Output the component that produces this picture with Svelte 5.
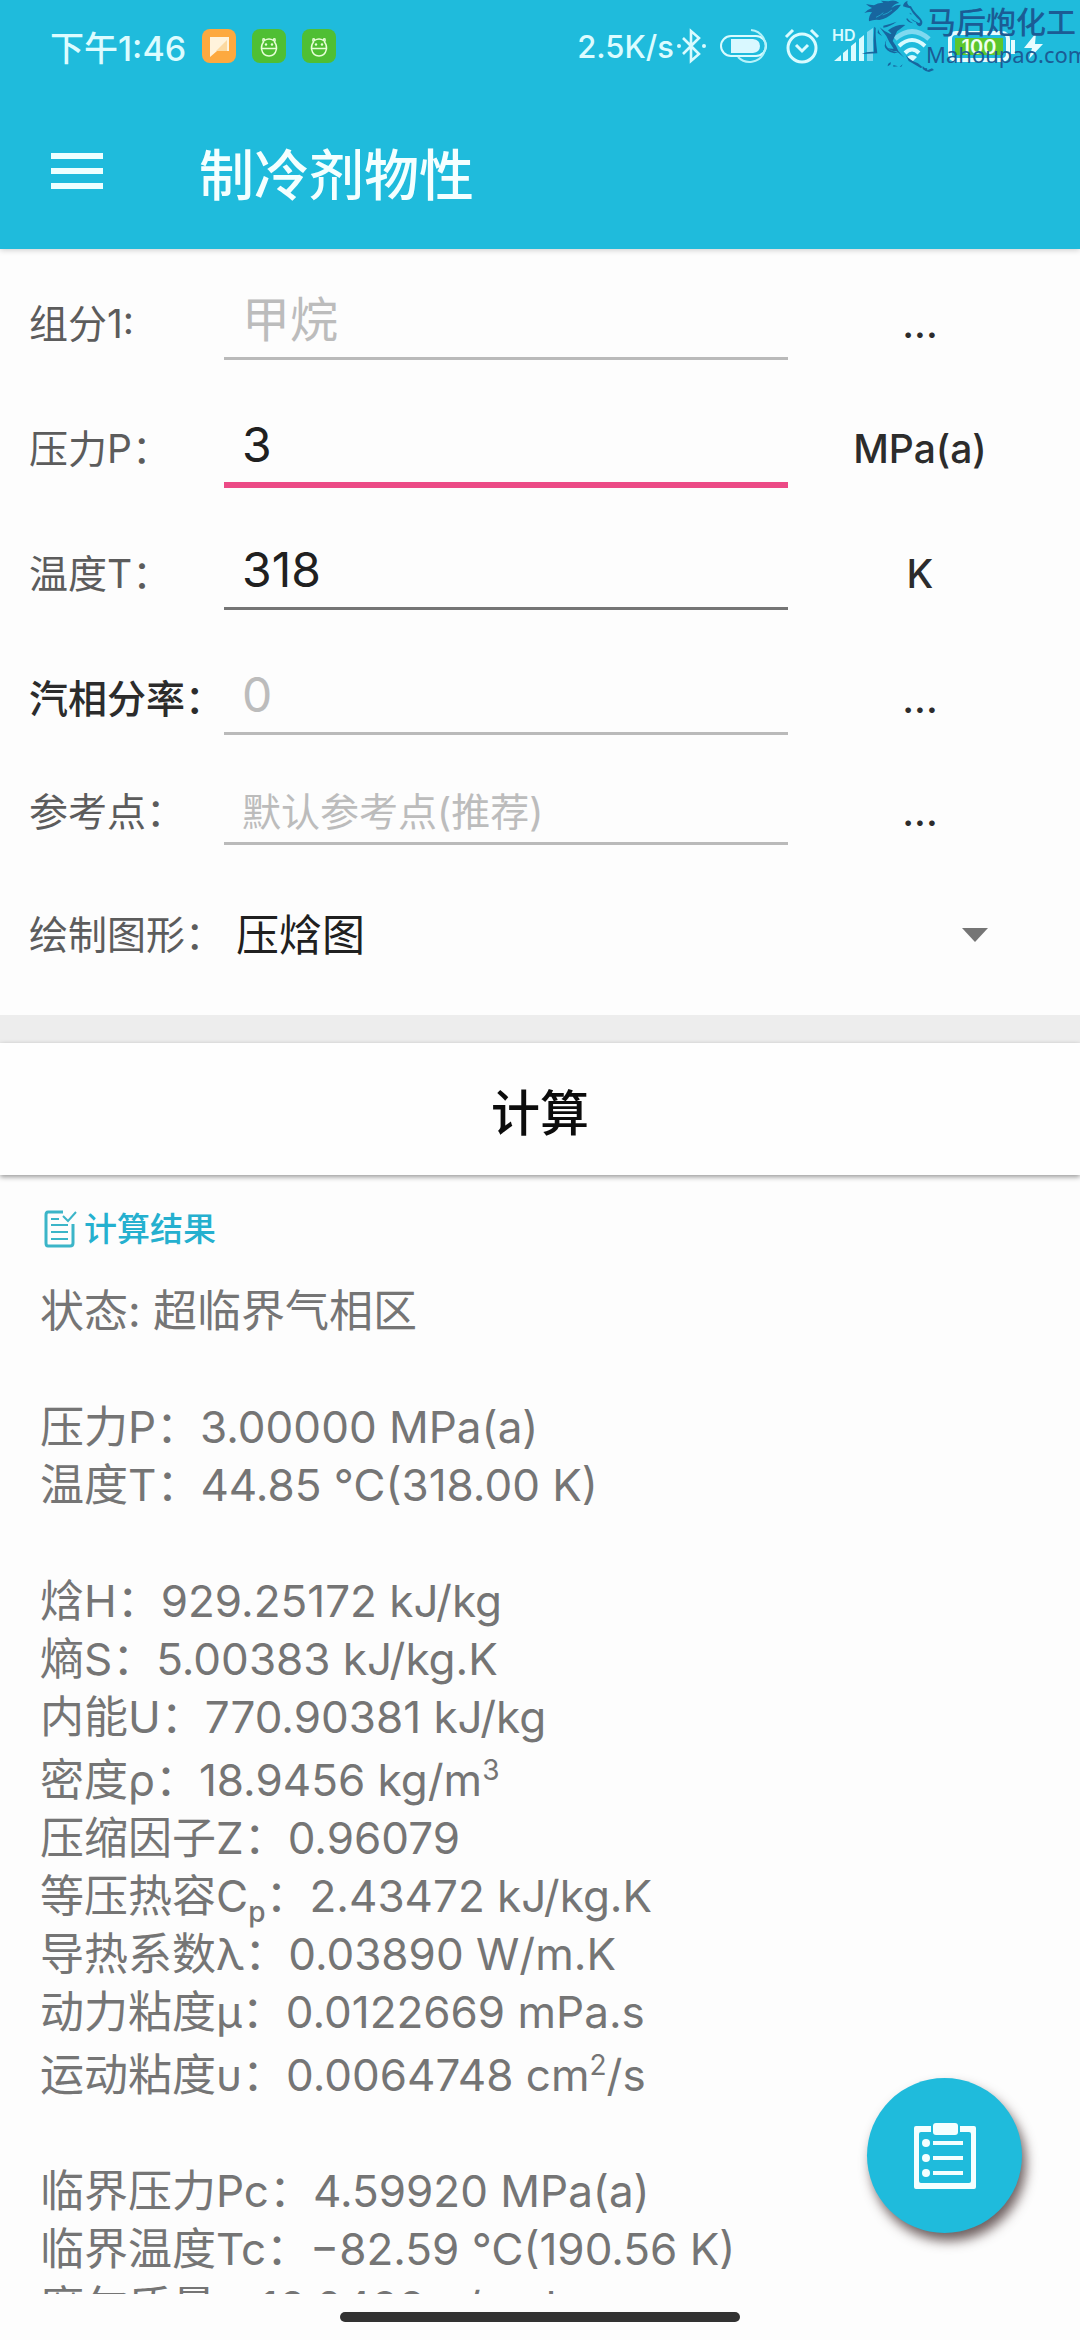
<script lang="ts">
  interface Field {
    id: string;
    label: string;
    value: string;
    placeholder: string;
    unit: string;
    strong?: boolean;
    compact?: boolean;
    active?: boolean;
  }

  interface Result {
    label: string;
    sub?: string;
    value: string;
    sup?: string;
    tail?: string;
  }

  let fields = $state<Field[]>([
    { id: "component", label: "组分1:", value: "", placeholder: "甲烷", unit: "..." },
    { id: "pressure", label: "压力P：", value: "3", placeholder: "", unit: "MPa(a)", active: true },
    { id: "temperature", label: "温度T：", value: "318", placeholder: "", unit: "K" },
    { id: "quality", label: "汽相分率：", value: "", placeholder: "0", unit: "...", strong: true },
    { id: "reference", label: "参考点：", value: "", placeholder: "默认参考点(推荐)", unit: "...", compact: true },
  ]);

  let chart = $state("压焓图");

  const groups: Result[][] = [
    [{ label: "状态: ", value: "超临界气相区" }],
    [
      { label: "压力P：", value: "3.00000 MPa(a)" },
      { label: "温度T：", value: "44.85 ℃(318.00 K)" },
    ],
    [
      { label: "焓H：", value: "929.25172 kJ/kg" },
      { label: "熵S：", value: "5.00383 kJ/kg.K" },
      { label: "内能U：", value: "770.90381 kJ/kg" },
      { label: "密度ρ：", value: "18.9456 kg/m", sup: "3" },
      { label: "压缩因子Z：", value: "0.96079" },
      { label: "等压热容C", sub: "p", value: "：2.43472 kJ/kg.K" },
      { label: "导热系数λ：", value: "0.03890 W/m.K" },
      { label: "动力粘度μ：", value: "0.0122669 mPa.s" },
      { label: "运动粘度υ：", value: "0.0064748 cm", sup: "2", tail: "/s" },
    ],
    [
      { label: "临界压力Pc：", value: "4.59920 MPa(a)" },
      { label: "临界温度Tc：", value: "−82.59 ℃(190.56 K)" },
      { label: "摩尔质量：", value: "16.0428 g/mol" },
    ],
  ];
</script>

{#snippet androidBadge()}
  <svg class="badge" viewBox="0 0 34 34" aria-hidden="true">
    <rect width="34" height="34" rx="8" fill="#4fbf33" />
    <g fill="none" stroke="#e8ffd8" stroke-width="1.4" stroke-linecap="round">
      <path d="M11 10 Q13 9 12.5 11.5 Q17 8.500 21.500 11.500 Q21 9 23 10 Q23.500 12 22.500 13 Q25 16 24.500 20 Q23 27 17 27 Q11 27 9.500 20 Q9 16 11.500 13 Q10.500 12 11 10 Z" />
      <path d="M9.500 19.500 H24.500" />
    </g>
    <circle cx="14" cy="15.500" r="1.200" fill="#e8ffd8" />
    <circle cx="20" cy="15.500" r="1.200" fill="#e8ffd8" />
  </svg>
{/snippet}

<div class="screen">
  <header>
    <div class="status">
      <span class="clock">下午1:46</span>
      <div class="badges">
        <svg class="badge" viewBox="0 0 34 34" aria-hidden="true">
          <rect width="34" height="34" rx="8" fill="#fda93f" />
          <path d="M8 8 H27 V22 H15 L8 28 Z" fill="#fff3dc" />
          <path d="M14 22 L25 11 V22 Z" fill="#fcd9a0" />
        </svg>
        {@render androidBadge()}
        {@render androidBadge()}
      </div>
      <div class="indicators">
        <span class="speed">2.5K/s</span>
        <svg width="34" height="36" viewBox="0 0 34 36" aria-hidden="true">
          <path d="M9 10 L25 26 L17 33 V3 L25 10 L9 26" fill="none" stroke="#d9fbff" stroke-width="2.600" />
          <circle cx="5" cy="18" r="2" fill="#d9fbff" />
          <circle cx="30" cy="18" r="2" fill="#d9fbff" />
        </svg>
        <svg width="52" height="36" viewBox="0 0 52 36" aria-hidden="true">
          <rect x="1" y="8" width="45" height="20" rx="10" fill="none" stroke="#d9fbff" stroke-width="2" />
          <path d="M11 11 H33 Q40 12 40 18 Q40 24 33 25 H11 Z" fill="#d9f8ff" />
          <path d="M31 2 A16 16 0 1 1 18 29" fill="none" stroke="#b4f2fa" stroke-width="2" />
        </svg>
        <svg width="36" height="36" viewBox="0 0 36 36" aria-hidden="true">
          <g fill="none" stroke="#d9fbff" stroke-width="3">
            <circle cx="18" cy="20" r="14" />
            <path d="M12 17 L18 23 L24 17" />
            <path d="M2 9 L9 2 M27 2 L34 9" />
          </g>
        </svg>
        <svg width="50" height="36" viewBox="0 0 50 36" aria-hidden="true">
          <text x="0" y="13" class="hd">HD</text>
          <path d="M2 33 L9 27 V33 Z M11 25 L16 21 V33 H11 Z M19 18 L24 14 V33 H19 Z M27 11 L32 7 V33 H27 Z" fill="#d9fbff" />
          <path d="M35 4 L41 0 V33 H35 Z" fill="#7fd9f0" />
        </svg>
        <svg width="42" height="36" viewBox="0 0 42 36" aria-hidden="true">
          <path d="M1 11 Q18 -4 35 11" fill="none" stroke="#7fd9f0" stroke-width="5" />
          <path d="M5 18 Q18 6 31 18 M11 25 Q18 18 25 25" fill="none" stroke="#d9fbff" stroke-width="4" />
          <path d="M13 29 Q18 25 23 29 L18 34 Z" fill="#d9fbff" />
        </svg>
        <svg width="96" height="36" viewBox="0 0 96 36" aria-hidden="true">
          <rect x="2" y="5" width="58" height="27" rx="6" fill="none" stroke="#e6fcff" stroke-width="4" />
          <path d="M65 12 V26" stroke="#e6fcff" stroke-width="4" />
          <rect x="7" y="10" width="48" height="17" fill="#5cc62c" />
          <text x="31" y="26" class="charge">100</text>
          <path d="M88 5 L76 20 H84 L81 31 L95 16 H87 Z" fill="#e6fcff" />
        </svg>
      </div>
    </div>
    <div class="toolbar">
      <button class="menu" type="button" aria-label="菜单">
        <svg width="52" height="36" viewBox="0 0 52 36" aria-hidden="true">
          <path d="M0 3 H52 M0 18 H52 M0 33 H52" stroke="#eeffff" stroke-width="6" />
        </svg>
      </button>
      <h1>制冷剂物性</h1>
    </div>
    <div class="brand">
      <svg class="horse" viewBox="0 0 198 222" aria-hidden="true">
        <g fill="#17669f">
          <path d="M108 3 Q98 0 85 4 L62 2 Q68 5 70 8 Q54 7 42 16 Q30 15 18 12 Q26 20 36 24 Q22 28 13 39 Q27 34 36 37 Q25 48 27 64 Q43 57 58 60 Q82 55 99 39 Q116 26 123 14 Q105 14 94 24 Q103 10 118 9 Z" />
          <path d="M129 19 Q130 7 143 2 Q139 10 147 17 L153 19 Q158 31 170 43 Q184 56 187 65 Q188 75 179 79 Q170 77 168 67 Q157 63 151 55 Q164 64 172 67 Q176 71 181 67 Q181 60 171 53 Q158 42 150 25 L138 22 Z" />
          <path d="M148 38 L157 43 L151 43 Z M141 54 Q149 65 159 70 Q145 68 139 58 Z" />
          <path d="M43 80 L47 84 Q46 118 52 160 L5 162 Q20 154 42 155 Q39 119 43 80 Z" />
          <path d="M70 77 Q88 73 110 65 Q92 79 70 83 Z M84 91 Q112 72 136 75 Q117 91 96 103 Z" />
          <path d="M59 82 Q73 95 91 102 L112 92 Q103 111 98 123 Q108 135 115 153 L133 173 L110 154 Q95 154 81 143 Q91 147 101 146 Q87 127 79 108 Z" />
          <path d="M81 116 Q72 133 84 145 Q96 156 116 157 Q96 164 82 151 Q67 139 81 116 Z M54 88 Q57 99 66 108 Q59 103 53 99 Z" />
          <path d="M137 165 Q151 182 174 190 L188 202 L182 204 Q160 191 146 183 Z" />
          <path d="M93 187 Q83 189 83 199 L91 194 Z M100 195 L114 199 L100 200 Z M128 193 L119 200 L124 200 Z" />
          <path d="M188 198 Q195 207 201 204 L202 211 L216 205 L222 210 L207 216 Q197 215 188 207 Z" />
        </g>
        <path d="M68 45 Q83 41 96 30 M48 52 Q62 46 70 38" fill="none" stroke="#1fbbdc" stroke-width="2" />
      </svg>
      <div class="brand-text">
        <span class="brand-name">马后炮化工</span>
        <span class="brand-url">Mahoupao.com</span>
      </div>
    </div>
  </header>

  <form onsubmit={(e) => e.preventDefault()}>
    <div class="fields">
      {#each fields as field (field.id)}
        <div class="row" class:compact={field.compact}>
          <label for={field.id} class:strong={field.strong}>{field.label}</label>
          <input
            id={field.id}
            type="text"
            class:active={field.active}
            class:filled={field.value !== ""}
            placeholder={field.placeholder}
            bind:value={field.value}
          />
          <button class="unit" type="button">{field.unit}</button>
        </div>
      {/each}
      <div class="row chart">
        <label for="chart">绘制图形：</label>
        <div class="select">
          <select id="chart" bind:value={chart}>
            <option>压焓图</option>
            <option>温熵图</option>
          </select>
          <svg width="26" height="14" viewBox="0 0 26 14" aria-hidden="true">
            <path d="M0 0 H26 L13 14 Z" fill="#757575" />
          </svg>
        </div>
      </div>
    </div>
    <div class="action">
      <button class="calculate" type="submit">计算</button>
    </div>
  </form>

  <main>
    <h2>
      <svg width="34" height="38" viewBox="0 0 34 38" aria-hidden="true">
        <g fill="none" stroke="#3bb5c8" stroke-width="3">
          <path d="M19 2 H4 Q2 2 2 5 V33 Q2 36 4 36 H26 Q29 36 29 33 V14" />
          <path d="M7 9 H15 M7 15 H24 M7 22 H24 M7 29 H24" stroke-width="2" />
          <path d="M19 6 L24 11 L32 2" stroke-width="2" />
        </g>
      </svg>
      计算结果
    </h2>
    {#each groups as group}
      <div class="group">
        {#each group as item}
          <p class:raised={item.sup}>
            {item.label}{#if item.sub}<sub>{item.sub}</sub>{/if}{item.value}{#if item.sup}<sup>{item.sup}</sup>{/if}{item.tail ?? ""}
          </p>
        {/each}
      </div>
    {/each}
  </main>

  <div class="nav"><span class="handle"></span></div>

  <button class="fab" type="button" aria-label="记录">
    <svg width="64" height="68" viewBox="0 0 64 68" aria-hidden="true">
      <g fill="#f4ffff">
        <rect x="20" y="1" width="25" height="12" rx="3" />
        <circle cx="13" cy="21" r="4" />
        <circle cx="13" cy="36" r="4" />
        <circle cx="13" cy="51" r="4" />
        <path d="M20 19 H50 V23 H20 Z M20 34 H50 V38 H20 Z M20 49 H50 V53 H20 Z" />
        <path d="M18 4 H3 Q1 4 1 6 V65 Q1 67 3 67 H61 Q63 67 63 65 V6 Q63 4 61 4 H47 V10 H56 Q58 10 58 12 V59 Q58 61 56 61 H8 Q6 61 6 59 V12 Q6 10 8 10 H18 Z" />
      </g>
    </svg>
  </button>
</div>

<style>
  :global(body) {
    margin: 0;
    background: #fdfdfd;
  }

  .screen {
    position: relative;
    height: 100vh;
    display: flex;
    flex-direction: column;
    overflow: hidden;
    font-family: Inter, "Noto Sans CJK SC", sans-serif;
    color: #757575;
  }

  header {
    position: relative;
    flex: none;
    background: #1fbbdc;
    box-shadow: 0 1px 6px rgba(0, 0, 0, 0.2);
  }

  .status {
    height: 92px;
    display: flex;
    align-items: center;
    padding: 0 36px 0 50px;
    color: #dcfcff;
  }

  .clock {
    font-size: 34px;
    font-weight: 500;
  }

  .badges {
    display: flex;
    gap: 16px;
    margin-left: 16px;
  }

  .badge {
    width: 34px;
    height: 34px;
  }

  .indicators {
    display: flex;
    align-items: center;
    gap: 12px;
    margin-left: auto;
  }

  .speed {
    font-size: 31px;
    font-weight: 500;
  }

  .speed + svg {
    margin-left: -12px;
  }

  .hd {
    font-size: 16px;
    font-weight: 600;
    fill: #d9fbff;
  }

  .charge {
    font-size: 20px;
    font-weight: 600;
    fill: #f0fff0;
    text-anchor: middle;
  }

  .toolbar {
    height: 157px;
    display: flex;
    align-items: center;
    gap: 96px;
    padding-left: 51px;
  }

  button {
    padding: 0;
    border: 0;
    background: none;
    font-family: inherit;
    cursor: pointer;
  }

  .menu {
    display: flex;
  }

  h1 {
    margin: 0;
    padding-top: 8px;
    color: #f4ffff;
    font-size: 55px;
    font-weight: 500;
    line-height: 64px;
  }

  .brand {
    position: absolute;
    top: 0;
    right: 0;
    display: flex;
    color: #1b5c95;
  }

  .horse {
    width: 66px;
    height: 74px;
    overflow: visible;
  }

  .brand-text {
    display: flex;
    flex-direction: column;
    width: 154px;
    padding-top: 6px;
  }

  .brand-name {
    font-size: 30px;
    font-weight: 500;
    line-height: 32px;
  }

  .brand-url {
    font-family: "Noto Sans", sans-serif;
    font-size: 22px;
    line-height: 32px;
  }

  .fields {
    padding: 12px 28px 8px 29px;
  }

  .row {
    height: 125px;
    display: grid;
    grid-template-columns: 195px 1fr 264px;
    align-items: center;
  }

  .row.compact {
    height: 102px;
  }

  .row.chart {
    height: 144px;
    grid-template-columns: 195px 1fr;
  }

  label {
    color: #5c5c5c;
    font-size: 39px;
    line-height: 48px;
    white-space: nowrap;
  }

  label.strong {
    color: #2c2c2c;
    font-weight: 500;
  }

  input {
    align-self: start;
    box-sizing: content-box;
    min-width: 0;
    height: 76px;
    padding: 20px 18px 0;
    border: 0;
    border-bottom: 3px solid #bababa;
    outline: 0;
    background: none;
    color: #202020;
    font-family: inherit;
    font-size: 48px;
  }

  input::placeholder {
    color: #bcbcbc;
    opacity: 1;
  }

  input.filled {
    border-bottom-color: #757575;
  }

  input.active {
    border-bottom: 6px solid #ec4a86;
  }

  .compact input {
    height: 61px;
    font-size: 39px;
  }

  .unit {
    color: #2c2c2c;
    font-size: 39px;
    font-weight: 500;
    line-height: 48px;
  }

  .select {
    display: grid;
    align-items: center;
  }

  .select > * {
    grid-area: 1 / 1;
  }

  .select svg {
    justify-self: end;
    margin-right: 64px;
    pointer-events: none;
  }

  select {
    appearance: none;
    height: 96px;
    padding: 0 12px;
    border: 0;
    background: none;
    color: #202020;
    font-family: inherit;
    font-size: 43px;
  }

  .action {
    padding-top: 28px;
    background: #ededed;
  }

  .calculate {
    display: block;
    width: 100%;
    height: 132px;
    background: #fefefe;
    box-shadow: 0 2px 5px rgba(0, 0, 0, 0.4);
    color: #0c0c0c;
    font-size: 49px;
    font-weight: 500;
  }

  main {
    flex: 1;
    min-height: 0;
    overflow: hidden;
    margin-top: 8px;
    padding: 21px 40px 0;
  }

  h2 {
    display: flex;
    align-items: center;
    gap: 6px;
    margin: 0 0 28px;
    padding-left: 4px;
    color: #25b0cf;
    font-size: 33px;
    font-weight: 500;
    line-height: 50px;
  }

  .group {
    margin-bottom: 58px;
  }

  p {
    margin: 0;
    font-size: 44px;
    line-height: 58px;
    white-space: pre-wrap;
  }

  p.raised {
    padding-top: 5px;
  }

  sub,
  sup {
    font-size: 28px;
    line-height: 0;
  }

  sub {
    font-weight: 500;
  }

  .nav {
    flex: none;
    height: 46px;
    display: flex;
    justify-content: center;
    align-items: center;
  }

  .handle {
    width: 37%;
    height: 10px;
    border-radius: 5px;
    background: #323232;
  }

  .fab {
    position: absolute;
    right: 58px;
    bottom: 107px;
    width: 155px;
    height: 155px;
    display: flex;
    justify-content: center;
    align-items: center;
    border-radius: 50%;
    background: #1fbbdc;
    box-shadow: 4px 8px 12px rgba(50, 30, 30, 0.7);
  }
</style>
